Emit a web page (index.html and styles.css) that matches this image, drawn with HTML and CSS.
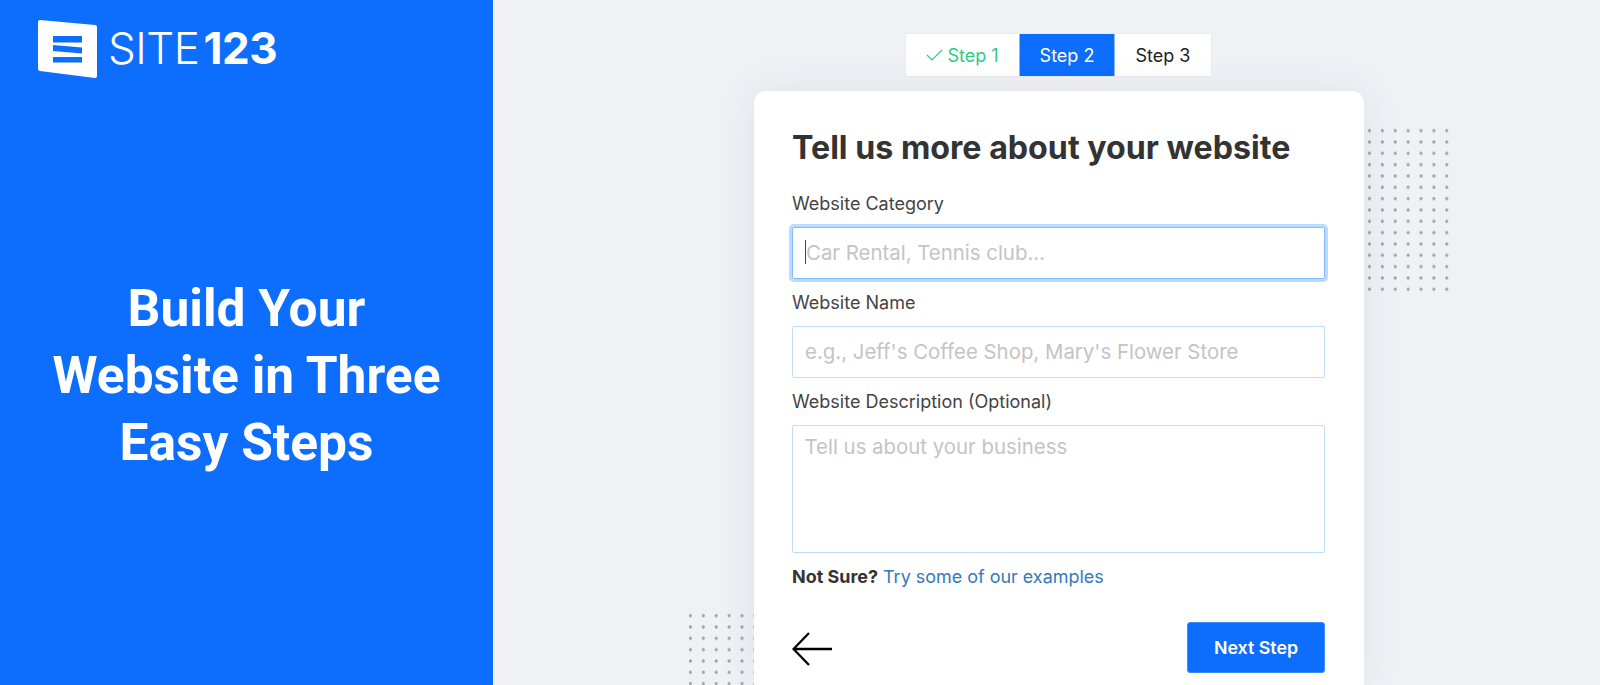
FILE: index.html
```html
<!DOCTYPE html>
<html lang="en">
<head>
<meta charset="UTF-8">
<meta name="viewport" content="width=device-width, initial-scale=1.0">
<title>Build Your Website</title>
<link rel="stylesheet" href="styles.css">
</head>
<body>
<aside class="sidebar">
    <div class="logo">
        <svg class="logo-mark" width="60" height="60" viewBox="0 0 60 60">
            <path fill="#fff" fill-rule="evenodd" d="M2 0 L57 5 Q59 5 59 7 L59 56 Q59 58 57 58 L2 51 Q0 51 0 49 L0 2 Q0 0 2 0 Z M15 16 L15 22.5 L44 22.5 L44 16 Z M15 25 L15 31 L44 33.5 L44 27.5 Z M15 37 L15 42.5 L44 42.5 L44 37 Z"/>
        </svg>
        <span class="logo-text">SITE<b>123</b></span>
    </div>
    <h1 class="tagline">Build Your<br>Website in Three<br>Easy Steps</h1>
</aside>
<main class="content">
    <div class="steps">
        <div class="step step-done">
            <svg width="17" height="12" viewBox="0 0 17 12"><path d="M1 6 L6 11 L16 1" fill="none" stroke="#2ecb85" stroke-width="1.2"/></svg>
            Step 1
        </div>
        <div class="step step-active">Step 2</div>
        <div class="step">Step 3</div>
    </div>
    <div class="card-wrap">
        <div class="dots dots-right"></div>
        <div class="dots dots-left"></div>
        <form class="card">
            <h2>Tell us more about your website</h2>
            <label class="field">
                <span>Website Category</span>
                <div class="input input-focus"><i class="caret"></i>Car Rental, Tennis club...</div>
            </label>
            <label class="field">
                <span>Website Name</span>
                <div class="input">e.g., Jeff's Coffee Shop, Mary's Flower Store</div>
            </label>
            <label class="field">
                <span>Website Description (Optional)</span>
                <div class="input input-area">Tell us about your business</div>
            </label>
            <p class="hint"><b>Not Sure?</b> <a href="#">Try some of our examples</a></p>
            <div class="actions">
                <svg class="back" width="41" height="36" viewBox="0 0 41 36"><path d="M40 18 L1.5 18 M17 2 L1.5 18 L17 34" fill="none" stroke="#000" stroke-width="2.3"/></svg>
                <button type="button" class="next">Next Step</button>
            </div>
        </form>
    </div>
</main>
</body>
</html>
```

FILE: styles.css
```css
* {
    box-sizing: border-box;
}

html, body {
    height: 100%;
}

body {
    display: flex;
    margin: 0;
    overflow: hidden;
    background: #f0f1f5;
    font-family: 'Inter', 'Liberation Sans', sans-serif;
    color: #333;
}

/* left blue panel */
.sidebar {
    position: relative;
    display: flex;
    align-items: center;
    justify-content: center;
    flex: 0 0 493px;
    padding-top: 66px;
    background: #0d6efd;
    color: #fff;
}

.logo {
    position: absolute;
    top: 20px;
    left: 38px;
    display: flex;
    align-items: center;
    gap: 10px;
}

.logo-text {
    margin-bottom: 4px;
    font-size: 44px;
    font-weight: 300;
    letter-spacing: -0.5px;
    line-height: 56px;
}

.logo-text b {
    margin-left: 4px;
    font-weight: 700;
}

.tagline {
    margin: 0;
    font-family: 'Roboto', 'Liberation Sans', sans-serif;
    font-size: 51.5px;
    font-weight: 700;
    line-height: 67px;
    text-align: center;
}

/* right side */
.content {
    display: flex;
    flex-direction: column;
    align-items: flex-start;
    flex: 1;
    padding: 33px 0 0 261px;
}

.steps {
    display: flex;
    flex: none;
    height: 44px;
    margin-left: 151px;
    background: #fff;
    border: 1px solid #eaebf0;
    font-size: 18px;
}

.step {
    display: flex;
    align-items: center;
    justify-content: center;
    gap: 4px;
    width: 113px;
    color: #222;
}

.step-done {
    color: #2ecb85;
}

.step-active {
    width: 96px;
    background: #0d6efd;
    border: 1px solid #8fb6f5;
    border-width: 0 1px;
    color: #fff;
}

.step:last-child {
    width: 96px;
}

.card-wrap {
    position: relative;
    flex: none;
    margin-top: 14px;
}

.card {
    position: relative;
    width: 610px;
    height: 594px;
    padding: 37px 39px 0 38px;
    background: #fff;
    border-radius: 12px 12px 0 0;
    box-shadow: 0 0 40px rgba(40, 50, 90, 0.08);
}

.card h2 {
    margin: 0 0 24px;
    font-size: 32.2px;
    font-weight: 700;
    line-height: 40px;
    color: #333;
}

.dots {
    position: absolute;
    background-image: radial-gradient(circle at center, #a3a3a8 1.4px, transparent 1.8px);
    background-size: 12.9px 11.33px;
}

.dots-right {
    top: 34px;
    left: 609px;
    width: 91px;
    height: 170px;
}

.dots-left {
    top: 519px;
    left: -70px;
    width: 78px;
    height: 75px;
}

.field {
    display: block;
    margin-bottom: 12px;
    font-size: 18px;
}

.field span {
    display: block;
    height: 35px;
    line-height: 24px;
    color: #444;
}

.input {
    display: flex;
    align-items: center;
    height: 52px;
    padding: 0 12px 2px;
    border: 1px solid #bcdcfb;
    border-radius: 2px;
    font-size: 20.4px;
    color: #c4c4c4;
}

.input-focus {
    border-color: #80bdff;
    box-shadow: 0 0 0 3px rgba(128, 189, 255, 0.55);
}

.caret {
    width: 1px;
    height: 24px;
    background: #444;
}

.input-area {
    align-items: flex-start;
    height: 128px;
    padding-top: 8px;
    padding-left: 11.5px;
}

.hint {
    margin: 3px 0 0;
    font-size: 17.95px;
    line-height: 24px;
    color: #333;
}

.hint a {
    color: #337ab7;
    text-decoration: none;
}

.actions {
    display: flex;
    align-items: center;
    justify-content: space-between;
    margin-top: 33px;
}

.back {
    margin-top: 3px;
}

.next {
    width: 138px;
    height: 51px;
    background: #0d6efd;
    border: 1px solid #3d8bfd;
    border-radius: 3px;
    font-family: inherit;
    font-size: 17.8px;
    font-weight: 600;
    color: #fff;
}
```
